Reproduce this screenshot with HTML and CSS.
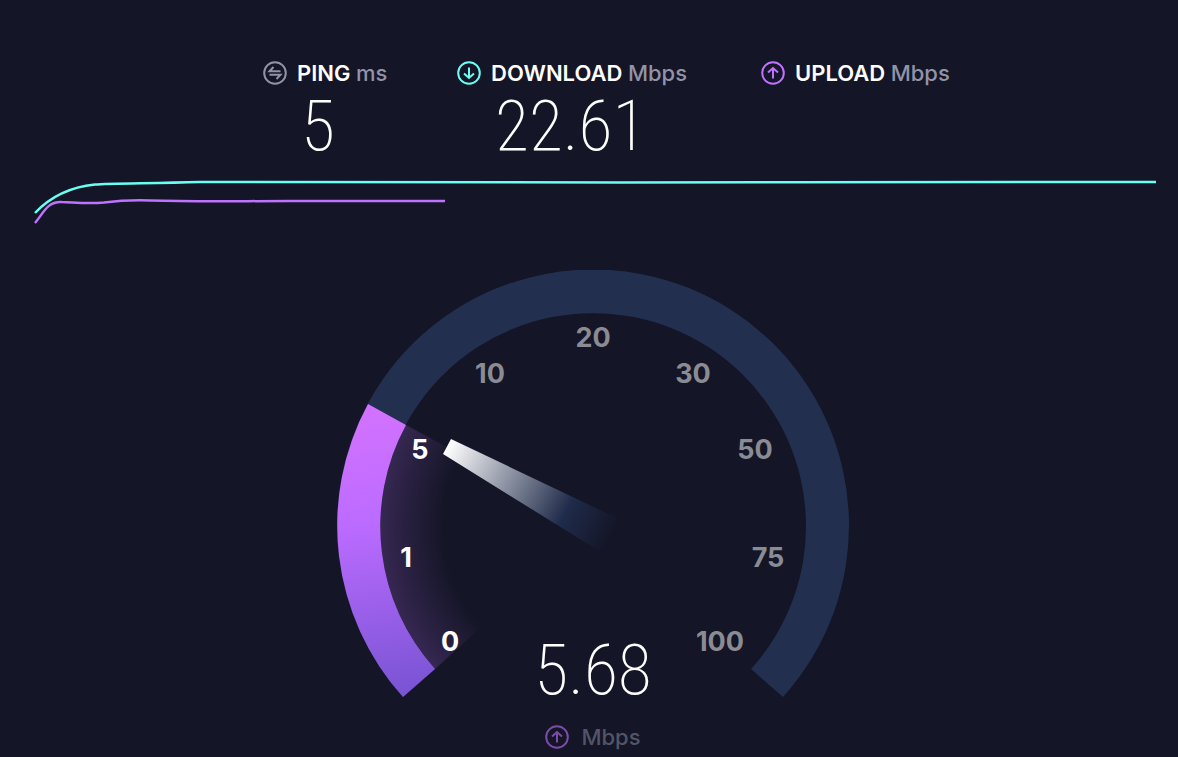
FILE: index.html
```
<!DOCTYPE html>
<html lang="en">
<head>
    <meta charset="UTF-8">
    <meta name="viewport" content="width=device-width, initial-scale=1.0">
    <title>Speed Test</title>
    <link rel="stylesheet" href="styles.css">
</head>
<body>
    <main class="speedtest">
        <section class="stats">
            <div class="stat">
                <h2 class="stat-title">
                    <svg class="icon icon-ping" viewBox="0 0 24 24">
                        <circle cx="12" cy="12" r="10.8"/>
                        <path d="M17.500 10.300H6.500L10.500 6M6.500 13.700H17.500L13.500 18"/>
                    </svg>
                    <span>PING <span class="unit">ms</span></span>
                </h2>
                <p class="stat-value">5</p>
            </div>
            <div class="stat">
                <h2 class="stat-title">
                    <svg class="icon icon-download" viewBox="0 0 24 24">
                        <circle cx="12" cy="12" r="10.8"/>
                        <path d="M12 6.500V17M7 12.500L12 17L17 12.500"/>
                    </svg>
                    <span>DOWNLOAD <span class="unit">Mbps</span></span>
                </h2>
                <p class="stat-value">22.61</p>
            </div>
            <div class="stat">
                <h2 class="stat-title">
                    <svg class="icon icon-upload" viewBox="0 0 24 24">
                        <circle cx="12" cy="12" r="10.8"/>
                        <path d="M12 17.500V7M7 11.500L12 7L17 11.500"/>
                    </svg>
                    <span>UPLOAD <span class="unit">Mbps</span></span>
                </h2>
            </div>
        </section>

        <svg class="chart" viewBox="0 0 1178 60" preserveAspectRatio="none">
            <path class="line-download" d="M35 43C50 27 70 17 95 14.500C110 13 150 13.500 200 12C300 11 420 12 620 12.500C800 12 1000 12 1156 12"/>
            <path class="line-upload" d="M35 53C43 44 47 31 62 32C76 32.500 88 34 104 32.500C120 30.500 135 30 150 30.500C200 32 240 31 290 31H445"/>
        </svg>

        <section class="gauge">
            <svg class="dial" viewBox="0 0 512 428">
                <defs>
                    <linearGradient id="arc" gradientUnits="userSpaceOnUse" x1="30" y1="134" x2="80" y2="427">
                        <stop offset="0" stop-color="#d472ff"/>
                        <stop offset="0.4" stop-color="#bb6bff"/>
                        <stop offset="1" stop-color="#7753d2"/>
                    </linearGradient>
                    <radialGradient id="glow" gradientUnits="userSpaceOnUse" cx="256" cy="256" r="213">
                        <stop offset="0.7" stop-color="#bf71ff" stop-opacity="0"/>
                        <stop offset="1" stop-color="#bf71ff" stop-opacity="0.2"/>
                    </radialGradient>
                    <linearGradient id="needle" gradientUnits="userSpaceOnUse" x1="110" y1="177" x2="276" y2="266">
                        <stop offset="0" stop-color="#fff"/>
                        <stop offset="0.72" stop-color="#1f2b4a"/>
                        <stop offset="1" stop-color="#1f2b4a" stop-opacity="0"/>
                    </linearGradient>
                </defs>
                <path class="track" d="M66 427A256 256 0 1 1 446 427L414 399A213 213 0 1 0 98 399Z"/>
                <path fill="url(#glow)" d="M98 399A213 213 0 0 1 69 155L256 256Z"/>
                <path fill="url(#arc)" d="M66 427A256 256 0 0 1 31 134L69 155A213 213 0 0 0 98 399Z"/>
                <path fill="url(#needle)" d="M114 169L284 250L262 281L106 184Z"/>
                <g class="marks">
                    <text class="on" x="113" y="381">0</text>
                    <text class="on" x="69" y="297">1</text>
                    <text class="on" x="83" y="189">5</text>
                    <text x="153" y="113">10</text>
                    <text x="256" y="77">20</text>
                    <text x="356" y="113">30</text>
                    <text x="418" y="189">50</text>
                    <text x="431" y="297">75</text>
                    <text x="383" y="381">100</text>
                </g>
            </svg>
            <div class="readout">
                <p class="stat-value">5.68</p>
                <p class="readout-unit">
                    <svg class="icon icon-upload" viewBox="0 0 24 24">
                        <circle cx="12" cy="12" r="10.8"/>
                        <path d="M12 17.500V7M7 11.500L12 7L17 11.500"/>
                    </svg>
                    <span>Mbps</span>
                </p>
            </div>
        </section>
    </main>
</body>
</html>
```
FILE: styles.css
```
* {
    box-sizing: border-box;
}
body {
    margin: 0;
    background-color: #141526;
    color: #fff;
    font-family: Inter, "Open Sans", sans-serif;
}
h2, p {
    margin: 0;
}
.speedtest {
    padding-top: 60px;
}
.stats {
    display: grid;
    grid-template-columns: 194px 304px 192px;
    justify-content: center;
    height: 110px;
    padding-left: 38px;
}
.stat-title {
    display: flex;
    align-items: center;
    gap: 10px;
    font-size: 22px;
    line-height: 26px;
    font-weight: 600;
    white-space: nowrap;
}
.unit {
    color: #9193a8;
    font-weight: 500;
}
.stat-value {
    font-family: "Roboto Condensed", Roboto, sans-serif;
    font-weight: 200;
    font-size: 70px;
    line-height: 80px;
}
.stat .stat-value {
    padding-left: 38px;
}
.icon {
    width: 24px;
    height: 24px;
    fill: none;
    stroke-width: 2;
}
.icon-ping {
    stroke: #9193a8;
}
.icon-download {
    stroke: #6afff3;
}
.icon-upload {
    stroke: #bf71ff;
}
.chart {
    display: block;
    width: 100%;
    height: 60px;
    fill: none;
    stroke-width: 2.5;
}
.line-download {
    stroke: #6afff3;
}
.line-upload {
    stroke: #bf71ff;
}

/* dial and readout share one grid cell */
.gauge {
    display: grid;
    justify-items: center;
    padding: 40px 0 6px 8px;
}
.dial, .readout {
    grid-area: 1 / 1;
}
.dial {
    width: 512px;
    max-width: 100%;
}
.track {
    fill: #222f4e;
}
.marks {
    fill: #8b8b93;
    font-size: 27px;
    font-weight: 700;
    text-anchor: middle;
}
.marks .on {
    fill: #fff;
}
.readout {
    display: flex;
    flex-direction: column;
    align-items: center;
    padding-top: 360px;
}
.readout-unit {
    display: flex;
    align-items: center;
    gap: 12px;
    margin-top: 14px;
    font-size: 22px;
    line-height: 26px;
    font-weight: 500;
    opacity: 0.6;
    color: #7d7f92;
}
```
